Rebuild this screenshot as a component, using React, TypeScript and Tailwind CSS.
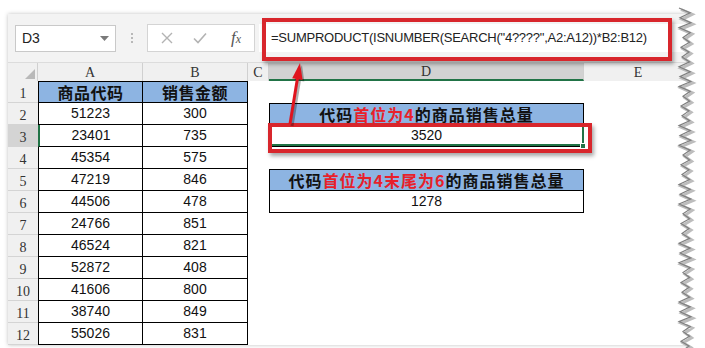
import React from 'react';

const rows: [number, number][] = [
  [51223, 300],
  [23401, 735],
  [45354, 575],
  [47219, 846],
  [44506, 478],
  [24766, 851],
  [46524, 821],
  [52872, 408],
  [41606, 800],
  [38740, 849],
  [55026, 831],
];

const cjk = "font-['Noto_Sans_CJK_SC','Liberation_Sans',sans-serif]";
const serif = "font-['Liberation_Serif','DejaVu_Serif',serif]";

function Toolbar() {
  return (
    <div className="flex h-[49px] items-center border-b border-[#dcdcdc] bg-[#f3f3f3] pl-[7px]">
      {/* name box */}
      <div className="flex h-[27px] w-[101px] items-center justify-between border border-[#c9c9c9] bg-white pl-[6px] pr-[6px] text-[14px] text-[#222]">
        <span>D3</span>
        <svg width="9" height="5" viewBox="0 0 9 5">
          <path d="M0 0 L9 0 L4.5 5 Z" fill="#7a7a7a" />
        </svg>
      </div>
      <div className="ml-[15px] flex w-[3px] flex-col gap-[2px]">
        <span className="h-[2px] w-[2px] bg-[#b8b8b8]" />
        <span className="h-[2px] w-[2px] bg-[#b8b8b8]" />
        <span className="h-[2px] w-[2px] bg-[#b8b8b8]" />
      </div>
      {/* cancel / enter / fx */}
      <div className="ml-[13px] flex h-[28px] w-[108px] items-center border border-[#d4d4d4] bg-white">
        <svg className="ml-[13px]" width="12" height="12" viewBox="0 0 12 12">
          <path d="M1 1 L11 11 M11 1 L1 11" stroke="#b3b3b3" strokeWidth="1.4" />
        </svg>
        <svg className="ml-[20px]" width="14" height="12" viewBox="0 0 14 12">
          <path d="M1 6.5 L5 10.5 L13 1.5" stroke="#b3b3b3" strokeWidth="1.6" fill="none" />
        </svg>
        <span className={`ml-[24px] ${serif} text-[17px] italic text-[#555]`}>
          f<span className="text-[12px]">x</span>
        </span>
      </div>
      {/* formula */}
      <div className="relative ml-[4px] flex h-[28px] flex-1 items-center bg-white pl-[12px] text-[13px] tracking-[-0.25px] text-[#222]">
        =SUMPRODUCT(ISNUMBER(SEARCH("4????",A2:A12))*B2:B12)
        <div className="absolute -top-[6px] left-[3px] h-[43px] w-[410px] border-[4px] border-[#d8262c] shadow-[2px_3px_4px_rgba(0,0,0,0.35)]" />
      </div>
    </div>
  );
}

function ColumnHeaders() {
  const cell = `flex h-full items-center justify-center border-r border-[#d0d0d0] ${serif} text-[14px] text-[#333]`;
  return (
    <div className="flex h-[18px] bg-[#f0f0f0]">
      <div className="flex w-[30px] items-end justify-end border-r border-[#d0d0d0] pb-[2px] pr-[2px]">
        <svg width="10" height="10" viewBox="0 0 10 10">
          <path d="M10 0 L10 10 L0 10 Z" fill="#b9b9b9" />
        </svg>
      </div>
      <div className={`${cell} w-[105px]`}>A</div>
      <div className={`${cell} w-[105px]`}>B</div>
      <div className={`${cell} w-[21px]`}>C</div>
      <div className={`${cell} w-[315px] border-b-2 border-b-[#217346] bg-[#d2d2d2] text-[#222]`}>D</div>
      <div className={`${cell} flex-1 border-r-0`}>E</div>
    </div>
  );
}

function Title({ mid }: { mid: string }) {
  return (
    <div
      className={`flex h-full items-center justify-center border border-black bg-[#8db4e2] ${cjk} text-[16px] font-bold tracking-[1px] text-[#111]`}
    >
      代码<span className="text-[#e8202a]">{mid}</span>的商品销售总量
    </div>
  );
}

function DCell({ row }: { row: number }) {
  if (row === 2) return <Title mid="首位为4" />;
  if (row === 5) return <Title mid="首位为4末尾为6" />;
  if (row === 3)
    return (
      <div className="relative flex h-full items-center justify-center border-x border-b border-black text-[14px] text-[#111]">
        3520
        <div className="absolute -inset-x-px -top-px bottom-0 border-2 border-[#217346]" />
        <div className="absolute -bottom-[3px] -right-[3px] h-[6px] w-[6px] border border-white bg-[#217346]" />
        <div className="absolute -left-[2px] -top-[2px] h-[30px] w-[324px] border-[4px] border-[#d8262c] shadow-[2px_3px_4px_rgba(0,0,0,0.35)]" />
      </div>
    );
  if (row === 6)
    return (
      <div className="flex h-full items-center justify-center border-x border-b border-black text-[14px] text-[#111]">
        1278
      </div>
    );
  return null;
}

function Row({ n, a, b }: { n: number; a: React.ReactNode; b: React.ReactNode }) {
  const head = n === 1;
  const data = `flex h-full w-[105px] items-center justify-center border-b border-r border-black ${
    head ? `bg-[#8db4e2] border-t ${cjk} text-[16px] font-bold tracking-[0.5px] text-[#111]` : 'text-[14px] text-[#111]'
  }`;
  const selected = n === 3;
  return (
    <div className="flex h-[22px]">
      <div
        className={`flex w-[30px] items-center justify-center border-b border-[#d4d4d4] pt-[4px] ${serif} text-[14px] ${
          selected ? 'bg-[#d4d4d4] text-[#333]' : 'bg-[#f0f0f0] text-[#333]'
        }`}
      >
        {n}
      </div>
      <div className={`${data} border-l ${selected ? 'border-l-[#217346] border-l-2' : ''}`}>{a}</div>
      <div className={data}>{b}</div>
      <div className="w-[21px]" />
      <div className="w-[315px]">
        <DCell row={n} />
      </div>
      <div className="flex-1" />
    </div>
  );
}

function TornEdge() {
  const pts: [number, number][] = [];
  const offs = [0, 2, 1, 3, 0, 2, 4, 1, 2, 0, 3, 1];
  for (let i = 0; i <= 72; i++) {
    const y = 8 + i * 4.9;
    const x = i % 2 === 0 ? 679 + offs[i % offs.length] : 689 + offs[(i * 5) % offs.length] * 0.6;
    pts.push([x, y]);
  }
  const line = pts.map(([x, y]) => `${x},${y}`).join(' ');
  const shadow = pts.map(([x, y]) => `${x + 2},${y + 1.5}`).join(' ');
  return (
    <svg className="pointer-events-none absolute inset-0" width="705" height="348" viewBox="0 0 705 348">
      <polygon points={`705,0 ${line} 705,348`} fill="#ffffff" />
      <polyline points={shadow} fill="none" stroke="#bdbdbd" strokeWidth="3" />
      <polyline points={line} fill="none" stroke="#7f7f7f" strokeWidth="1.2" />
    </svg>
  );
}

function Arrow() {
  return (
    <svg className="pointer-events-none absolute inset-0" width="705" height="348" viewBox="0 0 705 348">
      <g transform="translate(2,2)" opacity="0.3">
        <line x1="290" y1="124" x2="297.4" y2="78.8" stroke="#000" strokeWidth="3" />
        <polygon points="300,63 302.3,79.6 292.5,78" fill="#000" />
      </g>
      <line x1="290" y1="124" x2="297.4" y2="78.8" stroke="#e0141e" strokeWidth="3" />
      <polygon points="300,63 302.6,80 292.2,78.3" fill="#e0141e" />
    </svg>
  );
}

export default function App() {
  return (
    <div className="relative h-[348px] w-[705px] overflow-hidden bg-white font-['Liberation_Sans',Arial,sans-serif]">
      <div className="ml-[8px] mt-[14px] w-[684px] bg-white shadow-[0_0_4px_rgba(0,0,0,0.25)]">
        <Toolbar />
        <ColumnHeaders />
        <Row n={1} a="商品代码" b="销售金额" />
        {rows.map(([a, b], i) => (
          <Row key={i} n={i + 2} a={a} b={b} />
        ))}
      </div>
      <TornEdge />
      <Arrow />
    </div>
  );
}
